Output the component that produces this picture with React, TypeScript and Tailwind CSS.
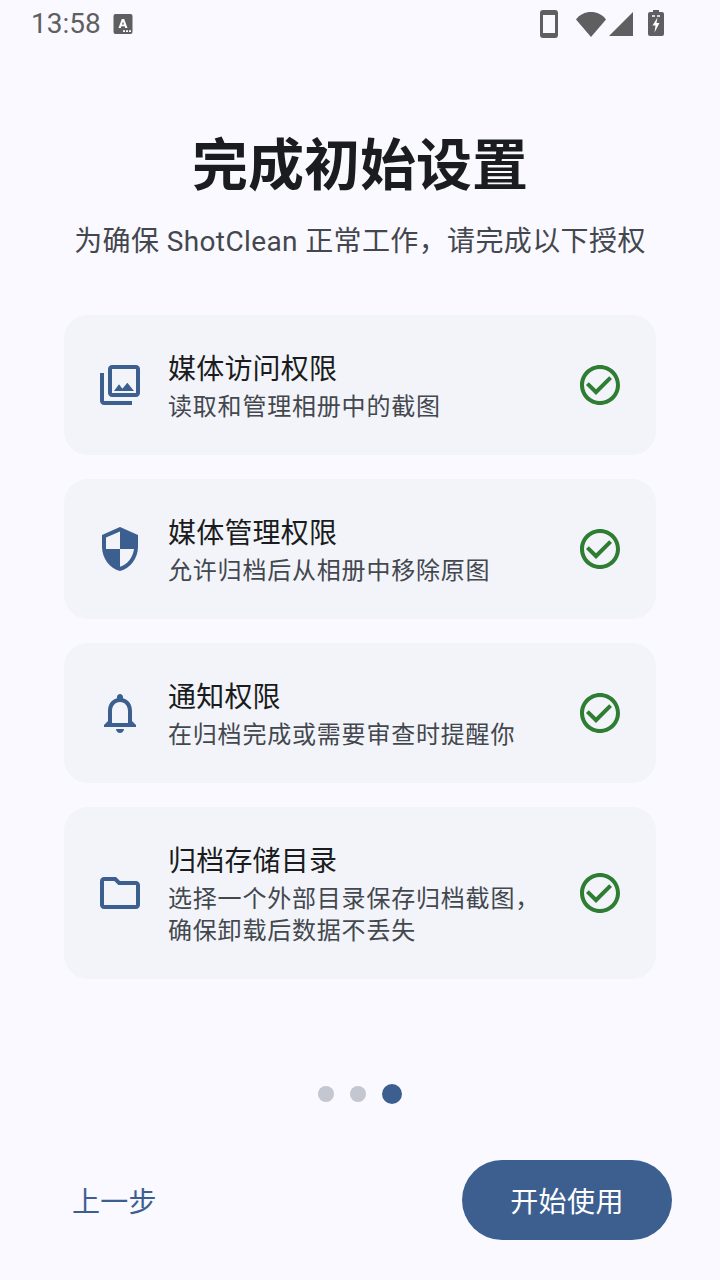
const PRIMARY = '#3d5f90'

const icons = {
  photos: 'M20 4v12H8V4h12m0-2H8c-1.1 0-2 .9-2 2v12c0 1.1.9 2 2 2h12c1.1 0 2-.9 2-2V4c0-1.1-.9-2-2-2zm-8.5 9.67l1.69 2.26 2.48-3.1L19 15H9zM2 6v14c0 1.1.9 2 2 2h14v-2H4V6H2z',
  shield: 'M12 1L3 5v6c0 5.55 3.84 10.74 9 12 5.16-1.26 9-6.45 9-12V5l-9-4zm0 10.99h7c-.53 4.12-3.28 7.79-7 8.94V12H5V6.3l7-3.11v8.8z',
  bell: 'M12 22c1.1 0 2-.9 2-2h-4c0 1.1.9 2 2 2zm6-6v-5c0-3.07-1.63-5.64-4.5-6.32V4c0-.83-.67-1.5-1.5-1.5s-1.5.67-1.5 1.5v.68C7.64 5.36 6 7.92 6 11v5l-2 2v1h16v-1l-2-2zm-2 1H8v-6c0-2.48 1.51-4.5 4-4.5s4 2.02 4 4.5v6z',
  folder: 'M9.17 6l2 2H20v10H4V6h5.17M10 4H4c-1.1 0-1.99.9-1.99 2L2 18c0 1.1.9 2 2 2h16c1.1 0 2-.9 2-2V8c0-1.1-.9-2-2-2h-8l-2-2z',
}

const items = [
  { icon: icons.photos, title: '媒体访问权限', desc: ['读取和管理相册中的截图'], h: 'h-[140px]' },
  { icon: icons.shield, title: '媒体管理权限', desc: ['允许归档后从相册中移除原图'], h: 'h-[140px]' },
  { icon: icons.bell, title: '通知权限', desc: ['在归档完成或需要审查时提醒你'], h: 'h-[140px]' },
  { icon: icons.folder, title: '归档存储目录', desc: ['选择一个外部目录保存归档截图，', '确保卸载后数据不丢失'], h: 'h-[172px]' },
]

function StatusBar() {
  return (
    <div className="flex h-[48px] items-center justify-between pl-[31px] pr-[56px] text-[#5f5f62]">
      <div className="flex items-center gap-[12px]">
        <span className="font-['Roboto',sans-serif] text-[28px] leading-none">13:58</span>
        <svg width="20" height="22" viewBox="0 0 20 22" fill="none">
          <rect x="0.5" y="1" width="19" height="20" rx="2" fill="#5f5f62" />
          <path d="M5.500 15 8.800 6h2.400l3.300 9h-2.300l-.6-1.800H8.400l-.6 1.800zM9 11.500h2l-1-3z" fill="#fff" />
          <path d="M10 17.300h2v1.800h-2zM13 17.300h2v1.800h-2zM16 17.300h2v1.800h-2z" fill="#fff" />
        </svg>
      </div>
      <div className="flex items-center">
        <svg width="18" height="28" viewBox="0 0 18 28" className="mr-[18px]">
          <path fillRule="evenodd" d="M3 0h12a3 3 0 0 1 3 3v22a3 3 0 0 1-3 3H3a3 3 0 0 1-3-3V3a3 3 0 0 1 3-3zm0 5v18h12V5z" fill="#5f5f62" />
        </svg>
        <svg width="30" height="26" viewBox="0 0 30 26" className="mr-[2px]">
          <path d="M0 8.500C3.500 3.500 9 1 15 1s11.500 2.500 15 7.500L15 26z" fill="#5f5f62" />
        </svg>
        <svg width="26" height="26" viewBox="0 0 26 26" className="mr-[14px]">
          <path d="M25 1v24H1z" fill="#5f5f62" />
        </svg>
        <svg width="16" height="26" viewBox="0 0 16 26" className="mt-[-2px]">
          <path d="M5 0h6v2h3a2 2 0 0 1 2 2v20a2 2 0 0 1-2 2H2a2 2 0 0 1-2-2V4a2 2 0 0 1 2-2h3z" fill="#5f5f62" />
          <path d="M4 5h3v2H4zM9 5h3v2H9z" fill="#d8d8dc" />
          <path d="M9.500 7.500 4.500 15.500h3l-1 7 5-9.500h-3z" fill="#fff" />
        </svg>
      </div>
    </div>
  )
}

export default function App() {
  return (
    <div className="flex h-[1280px] w-[720px] flex-col overflow-hidden bg-[#faf9ff] font-['Roboto','Noto_Sans_CJK_SC',sans-serif]">
      <StatusBar />

      <h1 className="mt-[82px] text-center text-[56px] font-bold leading-[72px] text-[#1a1c20]">完成初始设置</h1>
      <p className="mt-[20px] text-center text-[28px] leading-[40px] tracking-[0.38px] text-[#43474e]">为确保 ShotClean 正常工作，请完成以下授权</p>

      <div className="mt-[53px] flex flex-col gap-[24px] px-[64px]">
        {items.map(item => (
          <div key={item.title} className={`flex items-center gap-[24px] rounded-[24px] bg-[#f2f4f9] px-[32px] ${item.h}`}>
            <svg width="48" height="48" viewBox="0 0 24 24" fill={PRIMARY} className="shrink-0">
              <path d={item.icon} />
            </svg>
            <div className="min-w-0 flex-1 pt-[3px]">
              <div className="text-[28px] leading-[40px] tracking-[0.2px] text-[#1a1c20]">{item.title}</div>
              <div className="mt-[1px] text-[24px] leading-[32px] tracking-[0.8px] text-[#43474e]">
                {item.desc.map(line => <div key={line}>{line}</div>)}
              </div>
            </div>
            <svg width="48" height="48" viewBox="0 0 24 24" fill="#2e7d32" className="shrink-0">
              <path d="M16.59 7.58L10 14.17l-3.59-3.58L5 12l5 5 8-8zM12 2C6.480 2 2 6.480 2 12s4.480 10 10 10 10-4.480 10-10S17.520 2 12 2zm0 18c-4.420 0-8-3.580-8-8s3.580-8 8-8 8 3.580 8 8-3.580 8-8 8z" />
            </svg>
          </div>
        ))}
      </div>

      <div className="mt-[105px] flex h-[20px] items-center justify-center gap-[16px]">
        <span className="h-[16px] w-[16px] rounded-full bg-[#c4c6d0]" />
        <span className="h-[16px] w-[16px] rounded-full bg-[#c4c6d0]" />
        <span className="h-[20px] w-[20px] rounded-full bg-[#3d5f90]" />
      </div>

      <div className="mt-[56px] flex h-[80px] items-center justify-between pl-[72px] pr-[48px]">
        <span className="pt-[5px] text-[28px] tracking-[0.2px] text-[#3d5f90]">上一步</span>
        <div className="flex h-[80px] w-[210px] items-center justify-center rounded-[40px] bg-[#3d5f90] pt-[5px] text-[28px] tracking-[0.4px] text-white">开始使用</div>
      </div>
    </div>
  )
}
